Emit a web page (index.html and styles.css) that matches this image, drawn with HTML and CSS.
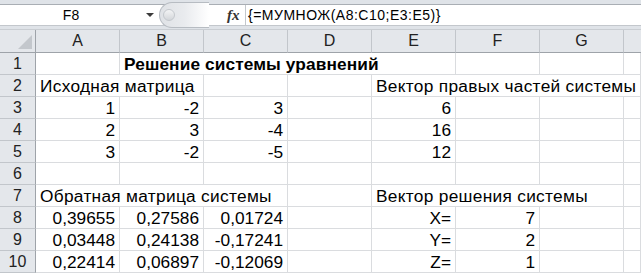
FILE: index.html
```html
<!DOCTYPE html>
<html lang="ru">

<head>
    <meta charset="UTF-8">
    <title>Решение системы уравнений</title>
    <link rel="stylesheet" href="styles.css">
</head>

<body>
    <div class="toolbar">
        <div class="fbar">
            <div class="namebox">
                <span class="name">F8</span>
                <span class="arrow"></span>
            </div>
            <div class="grip"><span class="dot"></span></div>
            <div class="fx">fx</div>
            <div class="formula">{=МУМНОЖ(A8:C10;E3:E5)}</div>
        </div>
    </div>

    <div class="sheet">
        <!-- header -->
        <div class="hd corner"><span class="tri"></span></div>
        <div class="hd col">A</div>
        <div class="hd col">B</div>
        <div class="hd col">C</div>
        <div class="hd col">D</div>
        <div class="hd col">E</div>
        <div class="hd col">F</div>
        <div class="hd col">G</div>
        <div class="hd col last"></div>

        <!-- 1 -->
        <div class="hd row">1</div>
        <div class="c"></div>
        <div class="c txt bold span4">Решение системы уравнений</div>
        <div class="c"></div>
        <div class="c"></div>
        <div class="c"></div>

        <!-- 2 -->
        <div class="hd row">2</div>
        <div class="c txt span2">Исходная матрица</div>
        <div class="c"></div>
        <div class="c"></div>
        <div class="c txt span4">Вектор правых частей системы</div>

        <!-- 3 -->
        <div class="hd row">3</div>
        <div class="c num">1</div>
        <div class="c num">-2</div>
        <div class="c num">3</div>
        <div class="c"></div>
        <div class="c num">6</div>
        <div class="c"></div>
        <div class="c"></div>
        <div class="c"></div>

        <!-- 4 -->
        <div class="hd row">4</div>
        <div class="c num">2</div>
        <div class="c num">3</div>
        <div class="c num">-4</div>
        <div class="c"></div>
        <div class="c num">16</div>
        <div class="c"></div>
        <div class="c"></div>
        <div class="c"></div>

        <!-- 5 -->
        <div class="hd row">5</div>
        <div class="c num">3</div>
        <div class="c num">-2</div>
        <div class="c num">-5</div>
        <div class="c"></div>
        <div class="c num">12</div>
        <div class="c"></div>
        <div class="c"></div>
        <div class="c"></div>

        <!-- 6 -->
        <div class="hd row">6</div>
        <div class="c"></div>
        <div class="c"></div>
        <div class="c"></div>
        <div class="c"></div>
        <div class="c"></div>
        <div class="c"></div>
        <div class="c"></div>
        <div class="c"></div>

        <!-- 7 -->
        <div class="hd row">7</div>
        <div class="c txt span3">Обратная матрица системы</div>
        <div class="c"></div>
        <div class="c txt span3">Вектор решения системы</div>
        <div class="c"></div>

        <!-- 8 -->
        <div class="hd row">8</div>
        <div class="c num">0,39655</div>
        <div class="c num">0,27586</div>
        <div class="c num">0,01724</div>
        <div class="c"></div>
        <div class="c num">X=</div>
        <div class="c num">7</div>
        <div class="c"></div>
        <div class="c"></div>

        <!-- 9 -->
        <div class="hd row">9</div>
        <div class="c num">0,03448</div>
        <div class="c num">0,24138</div>
        <div class="c num">-0,17241</div>
        <div class="c"></div>
        <div class="c num">Y=</div>
        <div class="c num">2</div>
        <div class="c"></div>
        <div class="c"></div>

        <!-- 10 -->
        <div class="hd row">10</div>
        <div class="c num">0,22414</div>
        <div class="c num">0,06897</div>
        <div class="c num">-0,12069</div>
        <div class="c"></div>
        <div class="c num">Z=</div>
        <div class="c num">1</div>
        <div class="c"></div>
        <div class="c"></div>
    </div>
</body>

</html>
```

FILE: styles.css
```css
* {
    margin: 0;
    padding: 0;
    box-sizing: border-box;
}

body {
    width: 641px;
    height: 274px;
    overflow: hidden;
    background: #fff;
    font-family: "Liberation Sans", Arial, sans-serif;
    color: #000;
}

/* formula bar */
.toolbar {
    height: 30px;
    padding-top: 4px;
    background: #dfe3e8;
    border-bottom: 1px solid #c9cdd2;
}

.fbar {
    display: flex;
    height: 22px;
    background: #fff;
    border-top: 1px solid #a9aeb4;
    border-bottom: 1px solid #c3c7cc;
}

.namebox {
    display: flex;
    align-items: center;
    width: 159px;
    font-size: 14px;
}

.name {
    width: 142px;
    text-align: center;
}

.arrow {
    width: 0;
    height: 0;
    margin-left: 4px;
    border-left: 4px solid transparent;
    border-right: 4px solid transparent;
    border-top: 4px solid #3b3b3b;
}

.grip {
    display: flex;
    align-items: center;
    width: 50px;
    height: 26px;
    margin-top: -3px;
    padding-left: 3px;
    border: 1px solid #b7bcc2;
    border-right: none;
    border-radius: 13px 0 0 13px;
    background: linear-gradient(to right, #dfe2e6 0%, #e9ebee 50%, #fff 100%);
}

.dot {
    width: 12px;
    height: 12px;
    border-radius: 50%;
    border: 1px solid #c4c8cd;
    background: linear-gradient(#f3f4f5, #d3d6da);
}

.fx {
    width: 36px;
    padding-left: 18px;
    font-family: "Liberation Serif", serif;
    font-style: italic;
    font-weight: bold;
    font-size: 15px;
    line-height: 20px;
    color: #333;
}

.formula {
    flex: 1;
    padding-left: 2px;
    border-left: 1px solid #c3c7cc;
    font-size: 14px;
    letter-spacing: 0.5px;
    line-height: 20px;
}

/* sheet */
.sheet {
    display: grid;
    grid-template-columns: 36px repeat(7, 84px) 1fr;
    grid-template-rows: 23px;
    grid-auto-rows: 22px;
}

.hd {
    background: #e4e7eb;
    color: #222;
    font-size: 16px;
    text-align: center;
    border-right: 1px solid #c2c6cb;
    border-bottom: 1px solid #c2c6cb;
}

.col {
    line-height: 22px;
    border-bottom-color: #9ea3a9;
}

.col.last {
    border-right: none;
}

.corner {
    display: flex;
    justify-content: flex-end;
    align-items: flex-end;
    padding: 0 3px 3px 0;
    border-right-color: #9ea3a9;
    border-bottom-color: #9ea3a9;
}

.tri {
    width: 0;
    height: 0;
    border-left: 14px solid transparent;
    border-bottom: 14px solid #c3c7cc;
}

.row {
    line-height: 21px;
    border-right-color: #9ea3a9;
}

.c {
    font-size: 17.3px;
    line-height: 21px;
    padding: 1px 4px 0 4px;
    white-space: nowrap;
    overflow: hidden;
    border-right: 1px solid #dadcdf;
    border-bottom: 1px solid #dadcdf;
}

.txt {
    letter-spacing: 0.3px;
}

.txt.bold {
    font-weight: bold;
    letter-spacing: 0.1px;
}

.num {
    text-align: right;
}

.span2 {
    grid-column: span 2;
}

.span3 {
    grid-column: span 3;
}

.span4 {
    grid-column: span 4;
}
```
